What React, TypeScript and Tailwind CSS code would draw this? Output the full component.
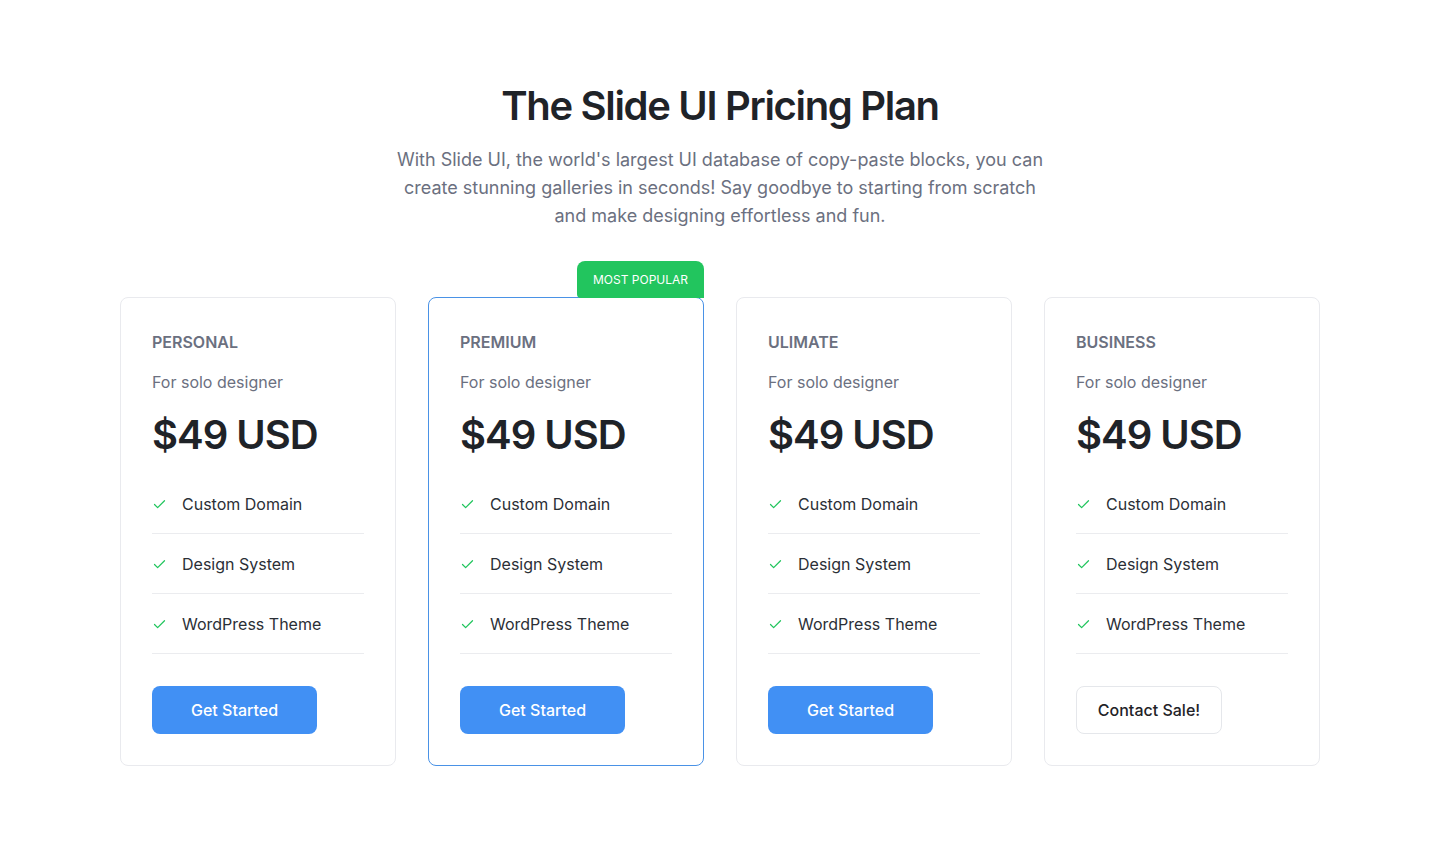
import { Check } from 'lucide-react';

type Plan = {
  name: string;
  popular?: boolean;
  cta: string;
  outline?: boolean;
};

const plans: Plan[] = [
  { name: 'Personal', cta: 'Get Started' },
  { name: 'Premium', cta: 'Get Started', popular: true },
  { name: 'Ulimate', cta: 'Get Started' },
  { name: 'Business', cta: 'Contact Sale!', outline: true },
];

const features = ['Custom Domain', 'Design System', 'WordPress Theme'];

const PlanCard = ({ plan }: { plan: Plan }) => (
  <div
    className={`relative rounded-lg border bg-white px-[31px] pt-8 pb-[31px] ${
      plan.popular ? 'border-[#4a92e6]' : 'border-[#e9eaee]'
    }`}
  >
    {plan.popular && (
      <div className="absolute -top-[37px] -right-px flex h-[37px] w-[127px] items-center justify-center rounded-t-lg rounded-bl-sm bg-[#22c55e] text-xs uppercase text-white">
        Most Popular
      </div>
    )}
    <h3 className="text-base font-semibold uppercase leading-6 text-[#6b7080]">{plan.name}</h3>
    <p className="mt-4 text-base leading-6 text-[#6b7080]">For solo designer</p>
    <p className="mt-[17px] text-[40px] font-semibold leading-[48px] tracking-tight text-[#1f2328]">
      $49 USD
    </p>
    <ul className="mt-[15px]">
      {features.map((f) => (
        <li key={f} className="flex items-center gap-[15px] border-b border-[#ebecef] pt-[18px] pb-[17px]">
          <Check className="h-[15px] w-[15px] text-[#22c55e]" strokeWidth={2} />
          <span className="text-base leading-6 text-[#2b2f36]">{f}</span>
        </li>
      ))}
    </ul>
    {plan.outline ? (
      <button className="mt-8 h-12 w-[146px] rounded-lg border border-[#e5e7eb] bg-white text-base font-medium text-[#1f2328]">
        {plan.cta}
      </button>
    ) : (
      <button className="mt-8 h-12 w-[165px] rounded-lg bg-[#4190f4] text-base font-medium text-white">
        {plan.cta}
      </button>
    )}
  </div>
);

const App = () => {
  return (
    <div className="min-h-screen bg-white font-['Inter',sans-serif]">
      <section className="mx-auto max-w-[1200px] pt-[82px]">
        <div className="flex flex-col items-center text-center">
          <h1 className="text-[40px] font-semibold leading-[48px] tracking-[-0.033em] text-[#1f2328]">
            The Slide UI Pricing Plan
          </h1>
          <p className="mt-4 max-w-[660px] text-lg leading-7 text-[#6b7080]">
            With Slide UI, the world's largest UI database of copy-paste blocks, you can create stunning
            galleries in seconds! Say goodbye to starting from scratch and make designing effortless and fun.
          </p>
        </div>
        <div className="mt-[67px] grid grid-cols-4 gap-8">
          {plans.map((p) => (
            <PlanCard key={p.name} plan={p} />
          ))}
        </div>
      </section>
    </div>
  );
};

export default App;
